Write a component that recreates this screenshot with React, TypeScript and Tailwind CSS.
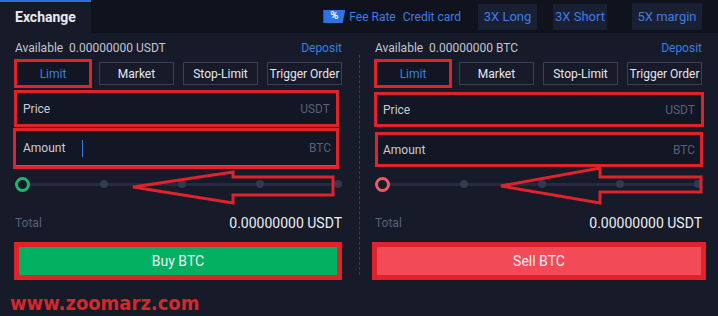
import React from "react";

const RED = "border-[#e0232b]";

function OrderTypes() {
  return (
    <div className="mt-[4px] h-[29px] flex items-center">
      <div className={`-ml-px w-[78px] h-[29px] border-[3px] ${RED} bg-[#121522] flex items-center justify-center text-[12px] text-[#3b7de3]`}>
        Limit
      </div>
      <div className="ml-[7px] w-[75px] h-[23px] border border-[#394057] flex items-center justify-center text-[12px] text-[#e4e6ec]">
        Market
      </div>
      <div className="ml-[9px] w-[75px] h-[23px] border border-[#394057] flex items-center justify-center text-[12px] text-[#e4e6ec]">
        Stop-Limit
      </div>
      <div className="ml-[9px] w-[75px] h-[23px] border border-[#394057] flex items-center justify-center text-[12px] text-[#e4e6ec]">
        Trigger Order
      </div>
    </div>
  );
}

function Column({
  side,
}: {
  side: "buy" | "sell";
}) {
  const buy = side === "buy";
  return (
    <div className="w-[327px] flex flex-col">
      <div className="mt-[7px] h-[15px] flex items-center justify-between text-[12px]">
        <span className="text-[#c3c6d1]">
          Available&nbsp; 0.00000000 {buy ? "USDT" : "BTC"}
        </span>
        <span className="text-[#3b7de3]">Deposit</span>
      </div>
      <OrderTypes />
      <div className="h-[84px] flex flex-col">
        <div
          className={`${buy ? "mt-[2px] h-[37px] w-[325px]" : "mt-[4px] h-[35px] w-[330px]"} -ml-px border-[3px] ${RED} bg-[#131725] flex items-center justify-between px-[6px] text-[12px]`}
        >
          <span className="text-[#c9ccd6]">Price</span>
          <span className="text-[#595f77]">USDT</span>
        </div>
        {buy ? (
          <div className={`mt-[1px] h-[41px] w-[326px] -ml-[2px] border-[3px] ${RED} bg-[#131725] text-[12px]`}>
            <div className="h-full border-b border-[#3b7de3] flex items-center pl-[7px] pr-[5px]">
              <span className="text-[#c9ccd6] w-[59px]">Amount</span>
              <span className="w-px h-[17px] bg-[#3b7de3]" />
              <span className="flex-1" />
              <span className="text-[#595f77]">BTC</span>
            </div>
          </div>
        ) : (
          <div className={`mt-[5px] h-[35px] w-[328px] border-[3px] ${RED} bg-[#131725] flex items-center justify-between px-[5px] text-[12px]`}>
            <span className="text-[#c9ccd6]">Amount</span>
            <span className="text-[#595f77]">BTC</span>
          </div>
        )}
      </div>
      <div className="relative h-[24px]">
        <div className="absolute left-[10px] right-[4px] top-[11px] h-[3px] bg-[#262b3f]" />
        <div className="absolute inset-0 flex items-center justify-between">
          <span
            className={`w-[15px] h-[15px] rounded-full border-[3px] bg-[#161a29] ${buy ? "border-[#1db56c]" : "border-[#ef5a66]"}`}
          />
          <span className="w-[8px] h-[8px] rounded-full bg-[#333a50]" />
          <span className="w-[8px] h-[8px] rounded-full bg-[#333a50]" />
          <span className="w-[8px] h-[8px] rounded-full bg-[#333a50]" />
          <span className="w-[8px] h-[8px] rounded-full bg-[#333a50]" />
        </div>
      </div>
      <div className="mt-[18px] h-[18px] flex items-center justify-between">
        <span className="text-[12px] text-[#5b617a]">Total</span>
        <span className="text-[14px] text-[#eceef3]">0.00000000 USDT</span>
      </div>
      <div
        className={`mt-[10px] h-[38px] ${buy ? "-ml-px w-[328px]" : "-ml-[3px] w-[334px]"} border-[5px] ${RED} ${buy ? "bg-[#03b062]" : "bg-[#f24b57]"} flex items-center justify-center text-[14px] text-[#eef0f3]`}
      >
        {buy ? "Buy BTC" : "Sell BTC"}
      </div>
    </div>
  );
}

export default function App() {
  return (
    <div className="relative w-[718px] h-[316px] overflow-hidden bg-[#161a29] font-['Roboto',sans-serif]">
      <div className="h-[33px] flex bg-[#10131e]">
        <div className="w-[91px] bg-[#161a29] border-t-2 border-[#2f6fd8] pl-[15px] flex items-center text-[14px] font-bold text-[#e8eaf0]">
          Exchange
        </div>
        <div className="flex-1 flex items-center justify-end pr-[16px]">
          <div className="w-[22px] h-[13px] bg-[#2c74df] flex items-center justify-center text-[11px] font-bold text-white [clip-path:polygon(0_0,100%_0,88%_100%,0_100%)]">
            %
          </div>
          <span className="ml-[4px] text-[12px] text-[#3b7de3]">Fee Rate</span>
          <span className="ml-[7px] text-[12px] text-[#3b7de3]">Credit card</span>
          <div className="ml-[17px] w-[59px] h-[26px] bg-[#1a2034] flex items-center justify-center text-[13px] text-[#3b7de3]">
            3X Long
          </div>
          <div className="ml-[16px] w-[54px] h-[26px] bg-[#1a2034] flex items-center justify-center text-[13px] text-[#3b7de3]">
            3X Short
          </div>
          <div className="ml-[25px] w-[70px] h-[27px] bg-[#1a2034] flex items-center justify-center text-[13px] text-[#3b7de3]">
            5X margin
          </div>
        </div>
      </div>
      <div className="flex pl-[15px]">
        <Column side="buy" />
        <div className="ml-[17px] mt-[22px] h-[220px] border-l border-dashed border-[#363c52]" />
        <div className="ml-[15px]">
          <Column side="sell" />
        </div>
      </div>
      <div className="mt-[11px] pl-[10px] text-[20px] leading-[24px] font-bold text-[#d8262c] font-['DejaVu_Sans_Condensed','DejaVu_Sans',sans-serif]">
        www.zoomarz.com
      </div>
      <svg
        className="absolute inset-0 pointer-events-none"
        width="718"
        height="316"
        viewBox="0 0 718 316"
      >
        <polygon
          points="133,187 233,172 233,177 333,177 333,195 233,195 233,203"
          fill="none"
          stroke="#e0232b"
          strokeWidth="3"
          strokeLinejoin="miter"
        />
        <polygon
          points="501,186 600,168 600,177 701,177 701,192 600,192 600,203"
          fill="none"
          stroke="#e0232b"
          strokeWidth="3"
          strokeLinejoin="miter"
        />
      </svg>
    </div>
  );
}
